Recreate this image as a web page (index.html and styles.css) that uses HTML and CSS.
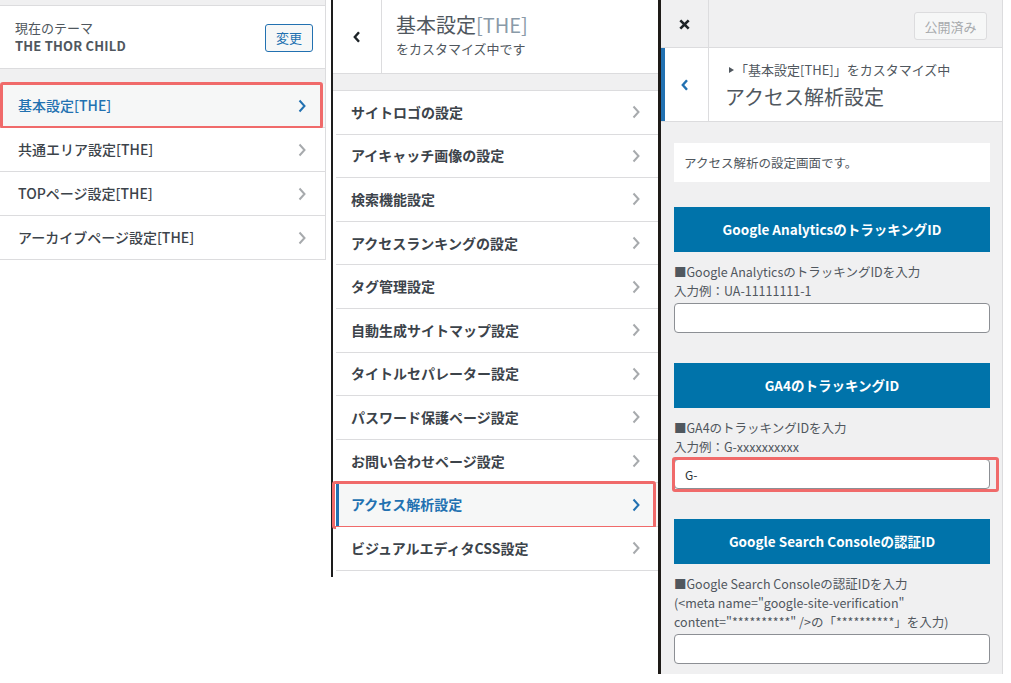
FILE: index.html
```html
<!DOCTYPE html>
<html lang="ja">
<head>
<meta charset="utf-8">
<title>カスタマイズ</title>
<link rel="stylesheet" href="styles.css">
</head>
<body>
<div class="screen">

  <section class="panel panel-left">
    <div class="topstrip"></div>
    <div class="theme">
      <div class="theme-info">
        <div class="theme-label">現在のテーマ</div>
        <div class="theme-name">THE THOR CHILD</div>
      </div>
      <button class="btn-change" type="button">変更</button>
    </div>
    <div class="band band-left"></div>
    <ul class="menu menu-left">
      <li class="item is-current marked marked-left"><span>基本設定[THE]</span><svg class="chev" viewBox="0 0 8 14"><path d="M1.5 1.5 L6.5 7 L1.5 12.5"/></svg></li>
      <li class="item"><span>共通エリア設定[THE]</span><svg class="chev" viewBox="0 0 8 14"><path d="M1.5 1.5 L6.5 7 L1.5 12.5"/></svg></li>
      <li class="item"><span>TOPページ設定[THE]</span><svg class="chev" viewBox="0 0 8 14"><path d="M1.5 1.5 L6.5 7 L1.5 12.5"/></svg></li>
      <li class="item"><span>アーカイブページ設定[THE]</span><svg class="chev" viewBox="0 0 8 14"><path d="M1.5 1.5 L6.5 7 L1.5 12.5"/></svg></li>
    </ul>
  </section>

  <section class="panel panel-mid">
    <div class="mid-head">
      <div class="back back-mid"><svg class="back-chev" viewBox="0 0 8 12"><path d="M6 1.2 L1.8 6 L6 10.8"/></svg></div>
      <div class="mid-title">
        <div class="mid-title-main">基本設定<span class="light">[THE]</span></div>
        <div class="mid-title-sub">をカスタマイズ中です</div>
      </div>
    </div>
    <div class="band band-mid"></div>
    <ul class="menu menu-mid">
      <li class="item"><span>サイトロゴの設定</span><svg class="chev" viewBox="0 0 8 14"><path d="M1.5 1.5 L6.5 7 L1.5 12.5"/></svg></li>
      <li class="item"><span>アイキャッチ画像の設定</span><svg class="chev" viewBox="0 0 8 14"><path d="M1.5 1.5 L6.5 7 L1.5 12.5"/></svg></li>
      <li class="item"><span>検索機能設定</span><svg class="chev" viewBox="0 0 8 14"><path d="M1.5 1.5 L6.5 7 L1.5 12.5"/></svg></li>
      <li class="item"><span>アクセスランキングの設定</span><svg class="chev" viewBox="0 0 8 14"><path d="M1.5 1.5 L6.5 7 L1.5 12.5"/></svg></li>
      <li class="item"><span>タグ管理設定</span><svg class="chev" viewBox="0 0 8 14"><path d="M1.5 1.5 L6.5 7 L1.5 12.5"/></svg></li>
      <li class="item"><span>自動生成サイトマップ設定</span><svg class="chev" viewBox="0 0 8 14"><path d="M1.5 1.5 L6.5 7 L1.5 12.5"/></svg></li>
      <li class="item"><span>タイトルセパレーター設定</span><svg class="chev" viewBox="0 0 8 14"><path d="M1.5 1.5 L6.5 7 L1.5 12.5"/></svg></li>
      <li class="item"><span>パスワード保護ページ設定</span><svg class="chev" viewBox="0 0 8 14"><path d="M1.5 1.5 L6.5 7 L1.5 12.5"/></svg></li>
      <li class="item"><span>お問い合わせページ設定</span><svg class="chev" viewBox="0 0 8 14"><path d="M1.5 1.5 L6.5 7 L1.5 12.5"/></svg></li>
      <li class="item is-current is-open marked marked-mid"><span>アクセス解析設定</span><svg class="chev" viewBox="0 0 8 14"><path d="M1.5 1.5 L6.5 7 L1.5 12.5"/></svg></li>
      <li class="item"><span>ビジュアルエディタCSS設定</span><svg class="chev" viewBox="0 0 8 14"><path d="M1.5 1.5 L6.5 7 L1.5 12.5"/></svg></li>
    </ul>
  </section>

  <section class="panel panel-right">
    <div class="topbar">
      <div class="close"><svg class="close-x" viewBox="0 0 10 10"><path d="M1.2 1.2 L8.8 8.8 M8.8 1.2 L1.2 8.8"/></svg></div>
      <button class="btn-publish" type="button">公開済み</button>
    </div>
    <div class="right-head">
      <div class="back back-right"><svg class="back-chev" viewBox="0 0 8 12"><path d="M6 1.2 L1.8 6 L6 10.8"/></svg></div>
      <div class="right-title">
        <div class="crumb"><svg class="tri" viewBox="0 0 5 6"><path d="M0 0 L5 3 L0 6 Z"/></svg>「基本設定[THE]」をカスタマイズ中</div>
        <div class="right-title-main">アクセス解析設定</div>
      </div>
    </div>
    <div class="content">
      <div class="desc-box">アクセス解析の設定画面です。</div>

      <div class="field first">
        <h3 class="field-head">Google AnalyticsのトラッキングID</h3>
        <p class="field-desc">■Google AnalyticsのトラッキングIDを入力<br>入力例：UA-11111111-1</p>
        <input class="field-input" type="text" value="">
      </div>

      <div class="field">
        <h3 class="field-head">GA4のトラッキングID</h3>
        <p class="field-desc">■GA4のトラッキングIDを入力<br>入力例：G-xxxxxxxxxx</p>
        <div class="input-wrap marked marked-input">
          <input class="field-input" type="text" value="G-">
        </div>
      </div>

      <div class="field last">
        <h3 class="field-head">Google Search Consoleの認証ID</h3>
        <p class="field-desc">■Google Search Consoleの認証IDを入力<br>(&lt;meta name="google-site-verification"<br>content="**********" /&gt;の「**********」を入力)</p>
        <input class="field-input" type="text" value="">
      </div>
    </div>
  </section>

</div>
</body>
</html>
```

FILE: styles.css
```css
* {
  box-sizing: border-box;
  margin: 0;
  padding: 0;
}

body {
  margin: 0;
  background: #ffffff;
  font-family: "Noto Sans CJK JP", "Noto Sans", sans-serif;
  color: #3c434a;
}

.screen {
  display: flex;
  align-items: flex-start;
  width: 1011px;
  height: 683px;
  overflow: hidden;
}

ul { list-style: none; }

/* ---------- shared ---------- */
.item {
  display: flex;
  align-items: center;
  justify-content: space-between;
  border-bottom: 1px solid #dcdcde;
  font-size: 14px;
  color: #3c434a;
  background: #ffffff;
  position: relative;
}
.item span {
  margin-top: -1px;
}

.chev {
  width: 8px;
  height: 14px;
  flex: none;
}
.chev path {
  fill: none;
  stroke: #a7aaad;
  stroke-width: 2;
}

.item.is-current {
  background: #f6f7f7;
  color: #2271b1;
}
.item.is-current .chev path { stroke: #2271b1; }

.marked { position: relative; }
.marked::after {
  content: "";
  position: absolute;
  border: 3px solid #f06a6a;
  border-radius: 3px;
  pointer-events: none;
}

.band {
  background: #f0f0f1;
}

.back {
  display: flex;
  align-items: center;
  justify-content: center;
  flex: none;
  border-right: 1px solid #dcdcde;
}
.back-chev {
  width: 8px;
  height: 12px;
}
.back-chev path {
  fill: none;
  stroke-width: 2.4;
}

/* ---------- left panel ---------- */
.panel-left {
  width: 326px;
  margin-right: 5px;
  border-right: 1px solid #dcdcde;
  background: #ffffff;
}

.topstrip {
  height: 6px;
  background: #f0f0f1;
  border-bottom: 1px solid #dcdcde;
}

.theme {
  height: 63px;
  display: flex;
  align-items: center;
  justify-content: space-between;
  padding: 0 12px 0 15px;
  border-bottom: 1px solid #dcdcde;
}
.theme-label {
  font-size: 13px;
  line-height: 18px;
  color: #50575e;
}
.theme-name {
  font-size: 13px;
  line-height: 18px;
  font-weight: 600;
  color: #50575e;
  letter-spacing: 0.2px;
}
.btn-change {
  width: 48px;
  height: 28px;
  margin-top: 1px;
  border: 1px solid #2271b1;
  border-radius: 3px;
  background: #f6f7f7;
  color: #2271b1;
  font-family: inherit;
  font-size: 13px;
}

.band-left {
  height: 15px;
}

.menu-left .item {
  height: 44px;
  padding: 0 19px 0 18px;
  font-weight: 500;
}
.marked-left::after {
  top: -2px;
  bottom: -2px;
  left: 0;
  right: 2px;
}

/* ---------- middle panel ---------- */
.panel-mid {
  width: 327px;
  border-left: 2px solid #1d1d1d;
  background: #ffffff;
  padding-bottom: 6px;
}

.mid-head {
  height: 74px;
  display: flex;
  border-bottom: 1px solid #dcdcde;
}
.back-mid {
  width: 49px;
}
.back-mid .back-chev path { stroke: #1d2327; }

.mid-title {
  padding: 12px 0 0 14px;
}
.mid-title-main {
  font-size: 20px;
  line-height: 26px;
  font-weight: 400;
  color: #50575e;
}
.mid-title-main .light {
  color: #8a9aa8;
}
.mid-title-sub {
  margin-top: 1px;
  font-size: 13px;
  line-height: 20px;
  color: #50575e;
}

.band-mid {
  height: 17px;
  border-bottom: 1px solid #dcdcde;
}

.menu-mid .item {
  height: 43.6px;
  margin-left: 3px;
  padding: 0 18px 0 15px;
  font-weight: 600;
}
.menu-mid .item.is-open {
  box-shadow: inset 3px 0 0 #2271b1;
}
.marked-mid::after {
  top: -2px;
  bottom: -3px;
  left: -4px;
  right: 2px;
}

/* ---------- right panel ---------- */
.panel-right {
  width: 345px;
  border-left: 3px solid #1e1b18;
  border-right: 1px solid #dcdcde;
  background: #f0f0f1;
}

.topbar {
  height: 48px;
  display: flex;
  justify-content: space-between;
  align-items: flex-start;
  border-bottom: 1px solid #dcdcde;
}
.close {
  width: 48px;
  height: 47px;
  display: flex;
  align-items: center;
  justify-content: center;
  border-right: 1px solid #dcdcde;
}
.close-x {
  width: 11px;
  height: 11px;
  margin-top: 2px;
}
.close-x path {
  fill: none;
  stroke: #1d2327;
  stroke-width: 2.4;
}
.btn-publish {
  width: 73px;
  height: 28px;
  margin: 12px 15px 0 0;
  border: 1px solid #dcdcde;
  border-radius: 3px;
  background: #f6f7f7;
  color: #a7aaad;
  font-family: inherit;
  font-size: 13px;
}

.right-head {
  height: 74px;
  display: flex;
  background: #ffffff;
  border-bottom: 1px solid #dcdcde;
}
.back-right {
  width: 48px;
  box-shadow: inset 4px 0 0 #2271b1;
}
.back-right .back-chev path { stroke: #2271b1; }

.right-title {
  padding: 12px 0 0 16px;
}
.crumb {
  font-size: 13px;
  line-height: 20px;
  color: #50575e;
  display: flex;
  align-items: center;
}
.tri {
  width: 5px;
  height: 6px;
  margin: 0 1px 0 4px;
}
.tri path { fill: #50575e; }
.right-title-main {
  margin-top: 3px;
  font-size: 20px;
  line-height: 28px;
  font-weight: 400;
  color: #50575e;
}

.content {
  padding: 21px 12px 10px 13px;
}
.desc-box {
  height: 39px;
  line-height: 39px;
  padding: 0 10px;
  background: #ffffff;
  font-size: 12.5px;
  color: #50575e;
}

.field {
  margin-bottom: 30px;
}
.field.first {
  margin-top: 25px;
}
.field.last {
  margin-bottom: 0;
}
.field-head {
  height: 45px;
  line-height: 45px;
  background: #0073aa;
  color: #ffffff;
  font-size: 13.5px;
  font-weight: 700;
  text-align: center;
}
.field-desc {
  margin-top: 10px;
  font-size: 12.5px;
  line-height: 19px;
  color: #50575e;
}
.field-input {
  display: block;
  width: 100%;
  height: 30px;
  margin-top: 3px;
  padding: 0 10px;
  border: 1px solid #8c8f94;
  border-radius: 4px;
  background: #ffffff;
  font-family: inherit;
  font-size: 12px;
  color: #2c3338;
}
.input-wrap {
  position: relative;
}
.marked-input::after {
  top: -2px;
  bottom: -3px;
  left: -2px;
  right: -9px;
}
```
